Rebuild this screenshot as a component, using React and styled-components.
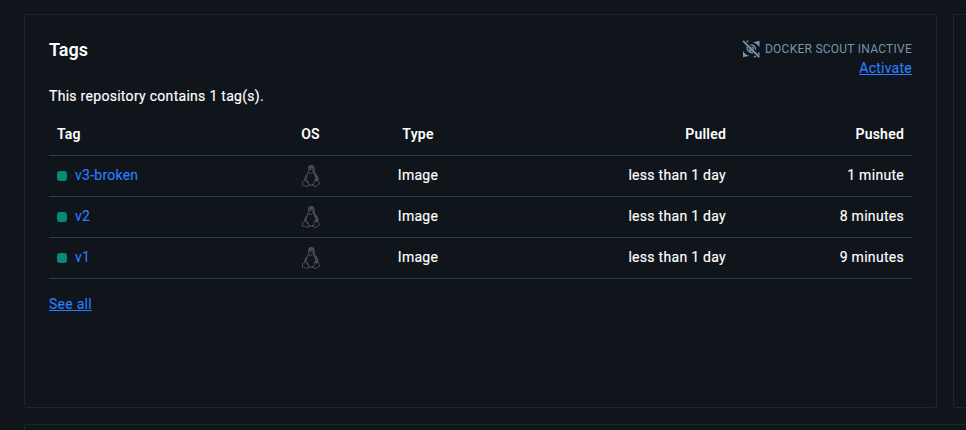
import React from "react";
import styled, { createGlobalStyle } from "styled-components";
import { VscTerminalLinux } from "react-icons/vsc";

const GlobalStyle = createGlobalStyle`
  * { box-sizing: border-box; }
  body {
    margin: 0;
    overflow: hidden;
    background: #10151b;
    color: #fff;
    font-family: Roboto, "Liberation Sans", sans-serif;
    font-size: 14px;
    line-height: 20px;
  }
`;

const Page = styled.main`
  display: grid;
  grid-template-columns: 913px 400px;
  grid-template-rows: 394px 200px;
  gap: 16px;
  width: 966px;
  height: 430px;
  padding: 14px 0 0 24px;
  overflow: hidden;
`;

const Card = styled.section`
  grid-column: ${(p) => (p.$wide ? "1 / -1" : "auto")};
  padding: 24px;
  border: 1px solid #1c262d;
  border-radius: 2px;
`;

const CardHeader = styled.header`
  display: flex;
  justify-content: space-between;
  height: 47px;
`;

const Title = styled.h2`
  margin: 0;
  font-size: 18px;
  font-weight: 600;
  line-height: 22px;
`;

const Scout = styled.div`
  display: flex;
  flex-direction: column;
  align-items: flex-end;
  letter-spacing: 0.25px;
`;

const ScoutStatus = styled.div`
  display: flex;
  align-items: center;
  gap: 5px;
  height: 19px;
  padding-top: 1px;
  color: #7794ab;
  font-size: 12px;
  line-height: 20px;
`;

const Link = styled.a`
  color: #2a7fff;
  font-weight: 400;
  letter-spacing: 0.25px;
  text-decoration: ${(p) => (p.$underlined ? "underline" : "none")};
  -webkit-text-stroke: 0.1px currentColor;
`;

const Summary = styled.p`
  margin: 0;
  letter-spacing: 0.29px;
  -webkit-text-stroke: 0.15px currentColor;
`;

const Table = styled.table`
  width: 863px;
  margin: 7px 0 15px;
  border-collapse: separate;
  border-spacing: 0;
  table-layout: fixed;
`;

const Cell = styled.td`
  height: 41px;
  padding: 0 8px 2px;
  border-bottom: 1px solid #2c3e48;
  letter-spacing: 0.29px;
  text-align: ${(p) => p.$align || "left"};
  -webkit-text-stroke: 0.15px currentColor;
`;

const HeadCell = styled(Cell).attrs({ as: "th" })`
  height: 43px;
  padding-bottom: 0;
  font-weight: 600;
  letter-spacing: 0.22px;
  -webkit-text-stroke: 0;
`;

const TagName = styled.div`
  display: flex;
  align-items: center;
  gap: 8px;
`;

const StatusDot = styled.span`
  width: 10px;
  height: 10px;
  margin-top: 2px;
  border-radius: 3px;
  background: #058a75;
`;

const OsIcon = styled.span`
  display: flex;
  justify-content: center;
  padding-top: 2px;
  color: #4a4d50;
  font-size: 22px;
`;

const ScoutIcon = () => (
  <svg width="18" height="18" viewBox="0 0 18 18" fill="none" stroke="currentColor">
    <path d="M1 0.800L17.300 17" strokeWidth="1.800" />
    <path d="M4 0.800h3L5.500 2.600zM17.500 0.800v6.400Q15.500 3.500 11 2.200zM17.500 11.500v4L15.800 13.500zM1 10.800Q3 15 7.500 15.800L1 17.300zM11 17.300l2-1.800 2 1.800z" fill="currentColor" stroke="none" />
    <path d="M5 6.500C4.500 10 7 12.800 11 12.800M8.500 4.800c3 0 5 2 5.200 4.800" strokeWidth="1.300" />
    <path d="M9.500 7.200c1.500 0 2.100 1 1.900 2.300M7.500 8.700c-.1 1.300.7 2.100 2 2.100" strokeWidth="1.300" />
  </svg>
);

const tags = [
  { name: "v3-broken", pushed: "1 minute" },
  { name: "v2", pushed: "8 minutes" },
  { name: "v1", pushed: "9 minutes" },
];

export default function App() {
  return (
    <>
      <GlobalStyle />
      <Page>
        <Card>
          <CardHeader>
            <Title>Tags</Title>
            <Scout>
              <ScoutStatus><ScoutIcon />DOCKER SCOUT INACTIVE</ScoutStatus>
              <Link href="#" $underlined>Activate</Link>
            </Scout>
          </CardHeader>
          <Summary>This repository contains 1 tag(s).</Summary>
          <Table>
            <colgroup>
              <col width="215" />
              <col width="93" />
              <col width="122" />
              <col width="255" />
              <col />
            </colgroup>
            <thead>
              <tr>
                <HeadCell>Tag</HeadCell>
                <HeadCell $align="center">OS</HeadCell>
                <HeadCell $align="center">Type</HeadCell>
                <HeadCell $align="right">Pulled</HeadCell>
                <HeadCell $align="right">Pushed</HeadCell>
              </tr>
            </thead>
            <tbody>
              {tags.map(({ name, pushed }) => (
                <tr key={name}>
                  <Cell><TagName><StatusDot /><Link href="#">{name}</Link></TagName></Cell>
                  <Cell><OsIcon><VscTerminalLinux /></OsIcon></Cell>
                  <Cell $align="center">Image</Cell>
                  <Cell $align="right">less than 1 day</Cell>
                  <Cell $align="right">{pushed}</Cell>
                </tr>
              ))}
            </tbody>
          </Table>
          <Link href="#" $underlined>See all</Link>
        </Card>
        <Card />
        <Card $wide />
      </Page>
    </>
  );
}
